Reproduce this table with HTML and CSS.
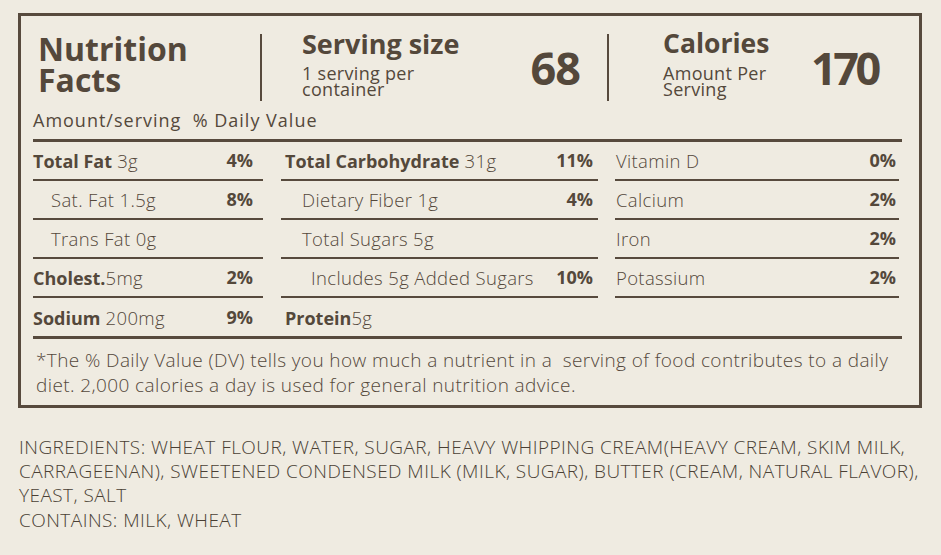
FILE: index.html
```html
<!DOCTYPE html>
<html lang="en">
<head>
<meta charset="utf-8">
<title>Nutrition Facts</title>
<link rel="stylesheet" href="styles.css">
</head>
<body>
<div class="page">
  <section class="label">
    <header class="head">
      <h1 class="title">Nutrition<br>Facts</h1>
      <div class="divider"></div>
      <div class="serving">
        <div class="serving-text">
          <div class="big-label">Serving size</div>
          <div class="sub">1 serving per<br>container</div>
        </div>
        <div class="big-num">68</div>
      </div>
      <div class="divider"></div>
      <div class="calories">
        <div class="cal-text">
          <div class="big-label">Calories</div>
          <div class="sub">Amount Per<br>Serving</div>
        </div>
        <div class="big-num num-170">170</div>
      </div>
    </header>
    <div class="amount">Amount/serving&nbsp; % Daily Value</div>
    <div class="grid">
      <div class="col col1">
        <div class="row"><span><b>Total Fat</b> 3g</span><b class="pct">4%</b></div>
        <div class="row ind"><span>Sat. Fat 1.5g</span><b class="pct">8%</b></div>
        <div class="row ind"><span>Trans Fat 0g</span></div>
        <div class="row"><span><b>Cholest.</b>5mg</span><b class="pct">2%</b></div>
        <div class="row last"><span><b>Sodium</b> 200mg</span><b class="pct">9%</b></div>
      </div>
      <div class="col col2">
        <div class="row"><span><b>Total Carbohydrate</b> 31g</span><b class="pct">11%</b></div>
        <div class="row ind"><span>Dietary Fiber 1g</span><b class="pct">4%</b></div>
        <div class="row ind"><span>Total Sugars 5g</span></div>
        <div class="row ind2"><span>Includes 5g Added Sugars</span><b class="pct">10%</b></div>
        <div class="row last"><span><b>Protein</b>5g</span></div>
      </div>
      <div class="col col3">
        <div class="row"><span>Vitamin D</span><b class="pct">0%</b></div>
        <div class="row"><span>Calcium</span><b class="pct">2%</b></div>
        <div class="row"><span>Iron</span><b class="pct">2%</b></div>
        <div class="row"><span>Potassium</span><b class="pct">2%</b></div>
      </div>
    </div>
    <p class="note">*The % Daily Value (DV) tells you how much a nutrient in a&nbsp; serving of food contributes to a daily diet. 2,000 calories a day is used for general nutrition advice.</p>
  </section>
  <p class="ingredients">INGREDIENTS: WHEAT FLOUR, WATER, SUGAR, HEAVY WHIPPING CREAM(HEAVY CREAM, SKIM MILK,<br>CARRAGEENAN), SWEETENED CONDENSED MILK (MILK, SUGAR), BUTTER (CREAM, NATURAL FLAVOR),<br>YEAST, SALT<br>CONTAINS: MILK, WHEAT</p>
</div>
</body>
</html>
```

FILE: styles.css
```css
html, body {
  margin: 0;
  padding: 0;
  background: #efebe1;
}
body {
  font-family: "Open Sans", "Noto Sans", sans-serif;
  color: #54483b;
}
.page {
  padding: 13px 0 0 18px;
}
.label {
  box-sizing: border-box;
  width: 904px;
  height: 395px;
  border: 3px solid #574a3d;
  padding: 0 17px 0 12px;
}
.head {
  display: flex;
  align-items: flex-start;
  height: 75px;
  margin-top: 14px;
}
.title {
  margin: 0;
  padding: 3px 0 0 5px;
  width: 222px;
  font-size: 32px;
  line-height: 31px;
  font-weight: 700;
}
.divider {
  width: 2px;
  height: 67px;
  margin-top: 4px;
  background: #574a3d;
}
.serving {
  display: flex;
  justify-content: space-between;
  align-items: flex-start;
  width: 278px;
  margin-left: 40px;
  margin-right: 27px;
}
.calories {
  display: flex;
  align-items: flex-start;
  margin-left: 54px;
}
.cal-text {
  width: 148px;
}
.big-label {
  font-size: 27px;
  font-weight: 700;
  line-height: 27px;
}
.calories .big-label {
  font-size: 26.5px;
}
.sub {
  margin-top: 8px;
  font-size: 18px;
  line-height: 16px;
  font-weight: 400;
  letter-spacing: 0.3px;
}
.big-num {
  margin-top: 15px;
  font-size: 45px;
  line-height: 45px;
  font-weight: 700;
  letter-spacing: -1px;
}
.num-170 {
  letter-spacing: -3.5px;
}
.amount {
  margin-top: 5px;
  height: 20px;
  padding-bottom: 9px;
  font-size: 18px;
  line-height: 20px;
  letter-spacing: 1px;
  border-bottom: 3px solid #574a3d;
}
.grid {
  display: grid;
  grid-template-columns: 230px 317px 1fr;
  column-gap: 18px;
  border-bottom: 3px solid #574a3d;
  height: 194px;
}
.col3 {
  margin-left: -1px;
  margin-right: 3px;
}
.row {
  box-sizing: border-box;
  height: 39px;
  display: flex;
  align-items: center;
  justify-content: space-between;
  border-bottom: 2px solid #574a3d;
  font-size: 18.5px;
  line-height: 37px;
  font-weight: 300;
  letter-spacing: 0.35px;
  white-space: nowrap;
}
.row.last {
  border-bottom: none;
}
.row b {
  font-weight: 700;
  font-size: 18px;
  letter-spacing: 0;
}
.col1 .row {
  padding-right: 10px;
}
.col2 .row {
  padding: 0 5px 0 4px;
}
.col3 .row {
  padding: 0 3px 0 1px;
}
.row.ind {
  padding-left: 18px;
}
.col2 .row.ind {
  padding-left: 21px;
}
.col2 .row.ind2 {
  padding-left: 30px;
}
.note {
  margin: 0;
  padding: 9px 0 0 3px;
  font-size: 19px;
  line-height: 25px;
  font-weight: 300;
  letter-spacing: 0.4px;
}
.ingredients {
  margin: 27px 0 0 1px;
  font-size: 19px;
  line-height: 24.2px;
  font-weight: 300;
  letter-spacing: 0.45px;
  color: #4a3f34;
}
```
